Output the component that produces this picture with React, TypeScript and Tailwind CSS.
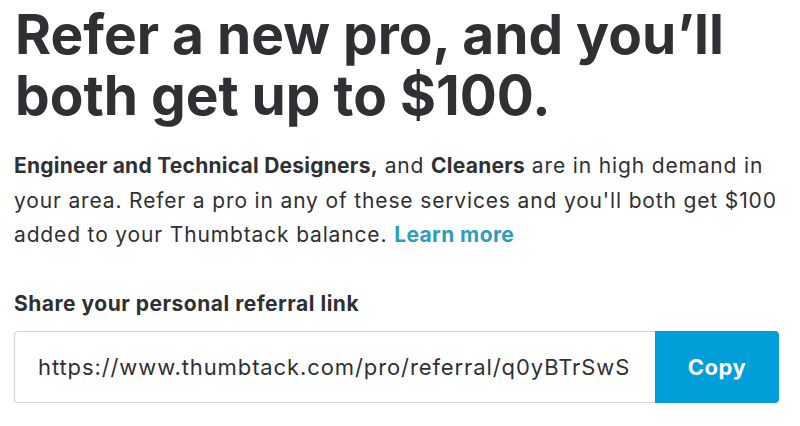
import React from 'react'

const App = (): React.ReactElement => {
  return (
    <div className="min-h-screen w-full bg-white font-[Inter] text-[#2f3033]">
      <div className="px-[14px] pt-[4px]">
        <h1 className="pl-[1px] text-[55px] font-bold leading-[61px]">
          Refer a new pro, and you’ll
          <br />
          both get up to $100.
        </h1>
        <p className="mt-[23px] whitespace-nowrap text-[21px] leading-[34.5px] tracking-[0.85px]">
          <span className="font-bold tracking-[0.25px]">Engineer and Technical Designers,</span> and{' '}
          <span className="font-bold tracking-[0.25px]">Cleaners</span> are in high demand in
          <br />
          your area. Refer a pro in any of these services and you'll both get $100
          <br />
          added to your Thumbtack balance.{' '}
          <a className="font-bold tracking-[0.4px] text-[#2d9cc0]">Learn more</a>
        </p>
        <div className="mt-[37px] text-[21px] font-bold leading-[28px] tracking-[0.5px]">
          Share your personal referral link
        </div>
        <div className="mt-[13px] flex h-[72px] w-[765px]">
          <div className="flex flex-1 items-center whitespace-nowrap rounded-l-[4px] border border-r-0 border-[#d3d4d5] pt-[2px] pl-[23px] text-[22px] tracking-[0.9px]">
            https://www.thumbtack.com/pro/referral/q0yBTrSwS
          </div>
          <button className="flex w-[124px] items-center justify-center rounded-r-[4px] bg-[#009fd9] pt-[2px] text-[22px] font-bold tracking-[0.5px] text-white">
            Copy
          </button>
        </div>
      </div>
    </div>
  )
}

export default App
